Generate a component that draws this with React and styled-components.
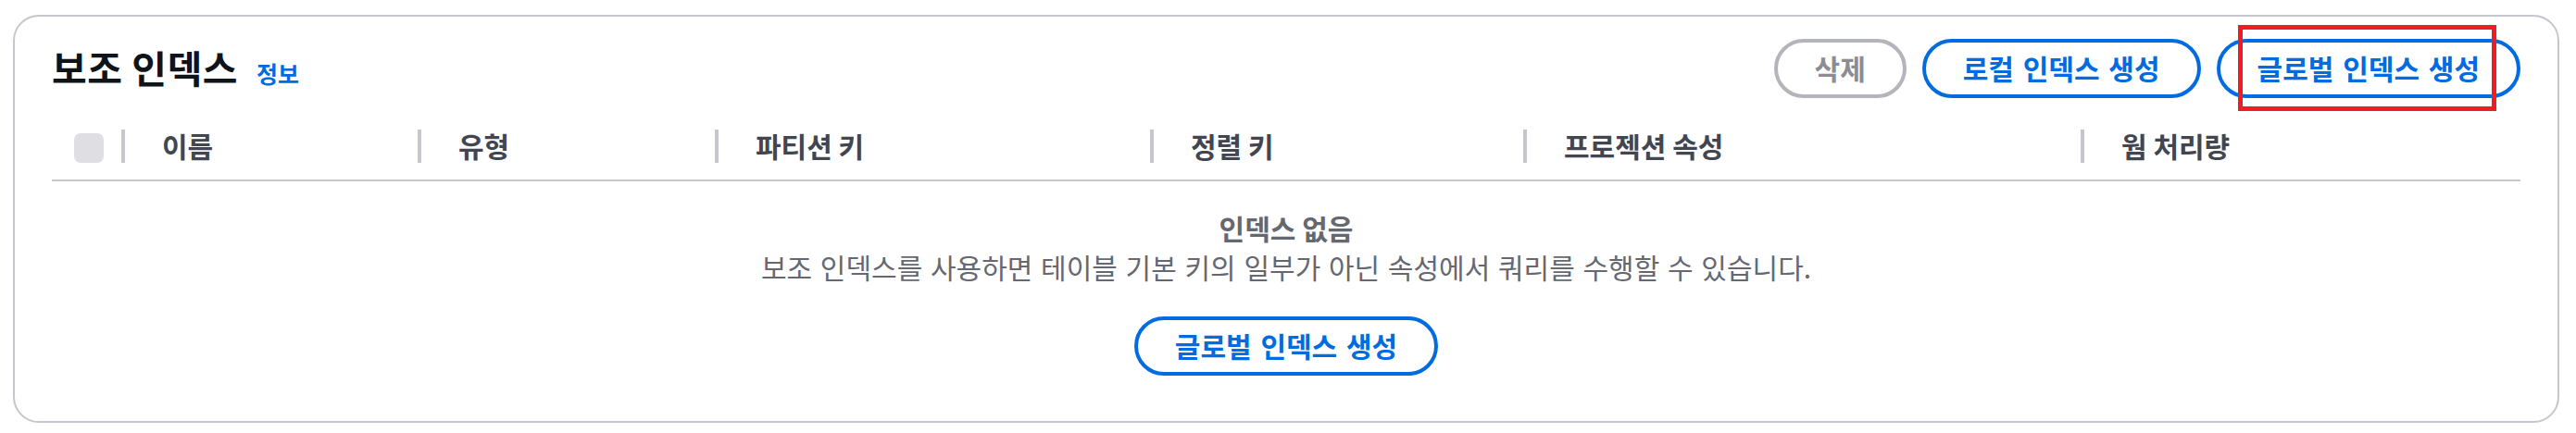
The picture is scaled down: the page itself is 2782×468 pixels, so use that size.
import styled, { createGlobalStyle } from "styled-components";

const GlobalStyle = createGlobalStyle`
  html, body {
    margin: 0;
    padding: 0;
    background: #ffffff;
  }
  body {
    font-family: "Noto Sans CJK KR", "Noto Sans", sans-serif;
    color: #0f141a;
  }
`;

const Page = styled.div`
  padding: 16px 18px 10px 14px;
`;

const Card = styled.section`
  position: relative;
  box-sizing: border-box;
  height: 441px;
  border: 2px solid #c6c6cd;
  border-radius: 28px;
  padding: 24px 40px 0 40px;
  background: #ffffff;
`;

const Header = styled.div`
  display: flex;
  align-items: center;
  justify-content: space-between;
  height: 64px;
`;

const TitleGroup = styled.div`
  display: flex;
  align-items: baseline;
  gap: 20px;
  margin-top: -4px;
`;

const Title = styled.h2`
  margin: 0;
  font-size: 41px;
  font-weight: 700;
  letter-spacing: 0.5px;
  color: #0f141a;
  line-height: 52px;
`;

const InfoLink = styled.a`
  font-size: 25px;
  font-weight: 700;
  color: #006ce0;
  text-decoration: none;
`;

const Actions = styled.div`
  display: flex;
  gap: 17px;
`;

const Button = styled.button`
  box-sizing: border-box;
  height: 64px;
  padding: 0 40px 2px;
  border-radius: 40px;
  border: 4px solid ${(p) => (p.disabled ? "#b4b4bb" : "#006ce0")};
  background: #ffffff;
  color: ${(p) => (p.disabled ? "#8c8c94" : "#006ce0")};
  font-family: inherit;
  font-size: 30px;
  font-weight: 700;
  line-height: 40px;
  word-spacing: 3px;
  white-space: nowrap;
  cursor: ${(p) => (p.disabled ? "default" : "pointer")};
`;

const HeadRow = styled.div`
  display: flex;
  margin-top: 24px;
  height: 64px;
  border-bottom: 2px solid #c6c6cd;
`;

const HeadCell = styled.div`
  position: relative;
  box-sizing: border-box;
  flex: 0 0 ${(p) => p.w}px;
  display: flex;
  align-items: center;
  padding-left: ${(p) => (p.first ? 24 : 42)}px;
  padding-bottom: ${(p) => (p.first ? 4 : 10)}px;
  font-size: 30px;
  font-weight: 700;
  color: #424650;
  white-space: nowrap;

  &::before {
    content: "";
    display: ${(p) => (p.first ? "none" : "block")};
    position: absolute;
    left: -2px;
    top: 10px;
    width: 4px;
    height: 36px;
    background: #c6c6cd;
  }
`;

const Checkbox = styled.span`
  display: block;
  width: 32px;
  height: 32px;
  border-radius: 7px;
  background: #dedee3;
`;

const Empty = styled.div`
  display: flex;
  flex-direction: column;
  align-items: center;
  padding-top: 30px;
  color: #656871;
`;

const EmptyTitle = styled.div`
  font-size: 30px;
  font-weight: 700;
  line-height: 40px;
`;

const EmptyText = styled.p`
  margin: 2px 0 34px;
  font-size: 30px;
  line-height: 40px;
  word-spacing: 2px;
`;

const Highlight = styled.div`
  position: absolute;
  left: 2401px;
  top: 9px;
  width: 279px;
  height: 93px;
  box-sizing: border-box;
  border: 5px solid #ee1d23;
  pointer-events: none;
`;

const columns = [
  { label: "이름", w: 320 },
  { label: "유형", w: 321 },
  { label: "파티션 키", w: 470 },
  { label: "정렬 키", w: 403 },
  { label: "프로젝션 속성", w: 602 },
  { label: "웜 처리량", w: 473 },
];

export default function App() {
  return (
    <Page>
      <GlobalStyle />
      <Card>
        <Header>
          <TitleGroup>
            <Title>보조 인덱스</Title>
            <InfoLink href="#">정보</InfoLink>
          </TitleGroup>
          <Actions>
            <Button disabled>삭제</Button>
            <Button>로컬 인덱스 생성</Button>
            <Button>글로벌 인덱스 생성</Button>
          </Actions>
        </Header>
        <HeadRow>
          <HeadCell first w={77}>
            <Checkbox />
          </HeadCell>
          {columns.map((c) => (
            <HeadCell key={c.label} w={c.w}>
              {c.label}
            </HeadCell>
          ))}
        </HeadRow>
        <Empty>
          <EmptyTitle>인덱스 없음</EmptyTitle>
          <EmptyText>
            보조 인덱스를 사용하면 테이블 기본 키의 일부가 아닌 속성에서 쿼리를 수행할 수 있습니다.
          </EmptyText>
          <Button>글로벌 인덱스 생성</Button>
        </Empty>
        <Highlight />
      </Card>
    </Page>
  );
}
